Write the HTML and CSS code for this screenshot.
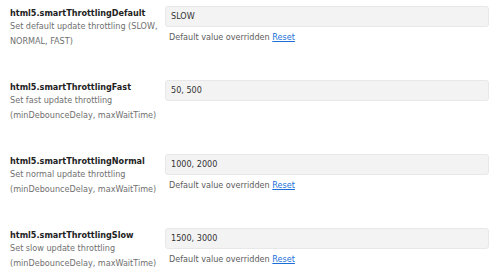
FILE: index.html
```html
<!DOCTYPE html>
<html>
<head>
<meta charset="utf-8">
<link rel="stylesheet" href="styles.css">
</head>
<body>
<div class="settings">
  <div class="setting">
    <div class="label">
      <div class="title">html5.smartThrottlingDefault</div>
      <div class="desc">Set default update throttling (SLOW, NORMAL, FAST)</div>
    </div>
    <div class="control">
      <div class="input">SLOW</div>
      <div class="msg">Default value overridden <a class="reset" href="#">Reset</a></div>
    </div>
  </div>
  <div class="setting">
    <div class="label">
      <div class="title">html5.smartThrottlingFast</div>
      <div class="desc">Set fast update throttling (minDebounceDelay, maxWaitTime)</div>
    </div>
    <div class="control">
      <div class="input">50, 500</div>
    </div>
  </div>
  <div class="setting">
    <div class="label">
      <div class="title">html5.smartThrottlingNormal</div>
      <div class="desc">Set normal update throttling (minDebounceDelay, maxWaitTime)</div>
    </div>
    <div class="control">
      <div class="input">1000, 2000</div>
      <div class="msg">Default value overridden <a class="reset" href="#">Reset</a></div>
    </div>
  </div>
  <div class="setting">
    <div class="label">
      <div class="title">html5.smartThrottlingSlow</div>
      <div class="desc">Set slow update throttling (minDebounceDelay, maxWaitTime)</div>
    </div>
    <div class="control">
      <div class="input">1500, 3000</div>
      <div class="msg">Default value overridden <a class="reset" href="#">Reset</a></div>
    </div>
  </div>
</div>
</body>
</html>
```

FILE: styles.css
```css
html, body {
  margin: 0;
  padding: 0;
  background: #ffffff;
}
body {
  font-family: "DejaVu Sans", Verdana, sans-serif;
  font-stretch: condensed;
  font-size: 9px;
  color: #666666;
}
.settings {
  display: flex;
  flex-direction: column;
  padding: 6px 10px 0 10px;
}
.setting {
  display: flex;
  gap: 5px;
  height: 74px;
  flex: none;
}
.setting:last-child {
  height: 51px;
}
.label {
  width: 150px;
  flex: none;
}
.title {
  font-weight: bold;
  color: #222222;
  line-height: 12px;
  padding-top: 1px;
}
.desc {
  line-height: 14.5px;
  color: #707070;
}
.control {
  flex: 1;
  display: flex;
  flex-direction: column;
}
.input {
  height: 19px;
  line-height: 19px;
  background: #f3f3f4;
  border: 1px solid #e8e8ea;
  border-radius: 3px;
  padding: 0 5px;
  color: #333333;
}
.msg {
  margin-top: 3px;
  padding-left: 4px;
  line-height: 14px;
  color: #5c5c5c;
}
.reset {
  color: #1a6fd8;
  text-decoration: underline;
}
```
